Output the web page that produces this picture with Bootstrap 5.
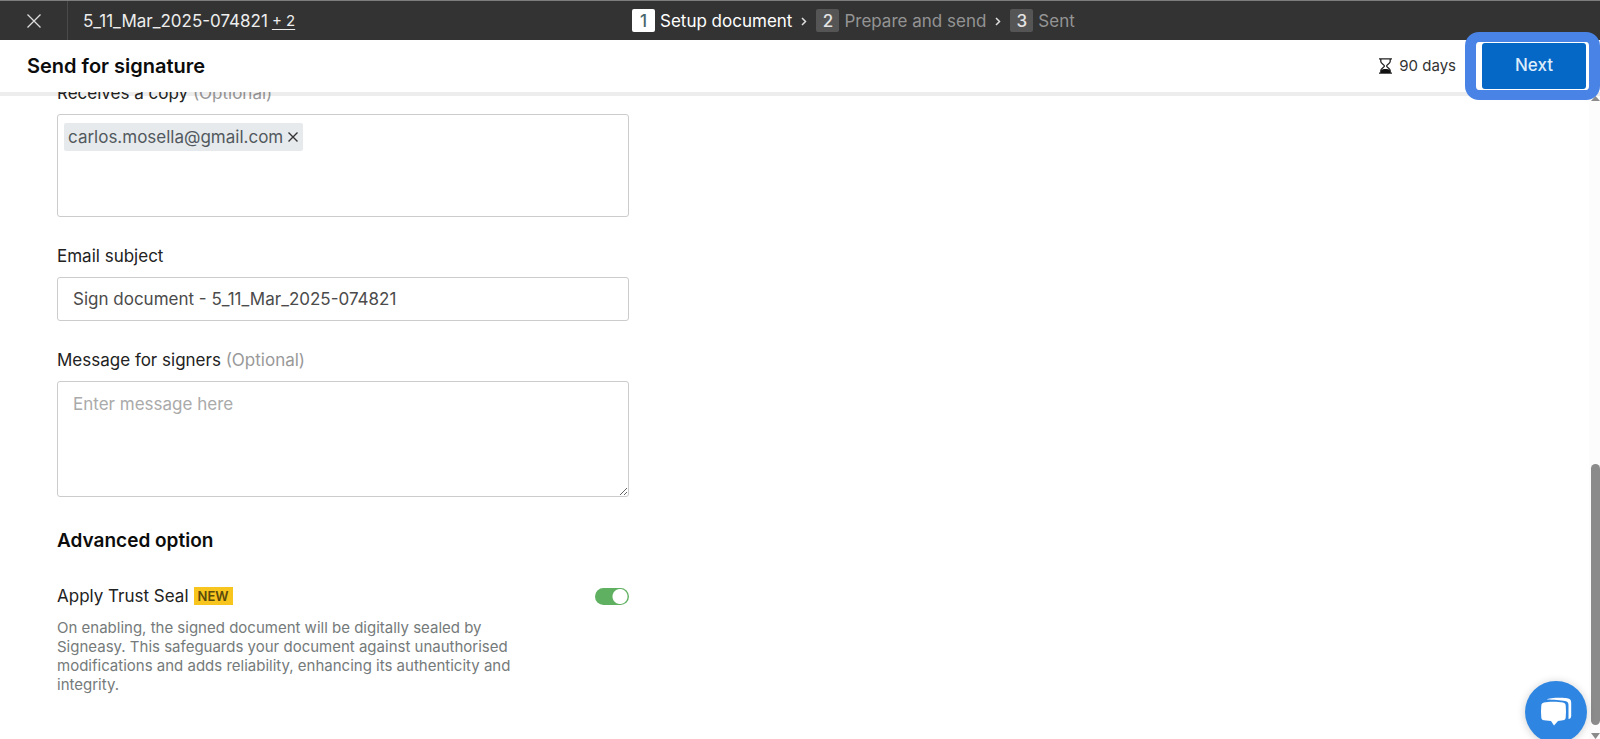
<!DOCTYPE html>
<html lang="en">
<head>
<meta charset="utf-8">
<meta name="viewport" content="width=device-width, initial-scale=1">
<title>Send for signature</title>
<link href="https://cdn.jsdelivr.net/npm/bootstrap@5.3.0/dist/css/bootstrap.min.css" rel="stylesheet">
<style>
  body { font-family: Inter, "Liberation Sans", sans-serif; font-size: 17px; line-height: 24px; color: #222; background: #fff; }
  .topbar { height: 40px; background: #333; border-top: 1px solid #7d7d7d; color: #ededed; }
  .topbar-file { width: 39.5%; }
  .close-cell { width: 68px; border-right: 1px solid #4a4a4a; color: #ddd; }
  .file-name { margin-left: 15px; }
  .more-link { font-size: 15px; color: #ededed; text-underline-offset: 3px; }
  .step-num { width: 23px; height: 23px; border-radius: 2px; background: #555; color: #e4e4e4; font-weight: 500; margin-right: 5px; }
  .step { color: #949494; }
  .step.active { color: #fff; }
  .step.active .step-num { background: #fff; color: #47666b; }
  .step-arrow { padding: 0 7px; }
  .subbar { height: 52px; z-index: 2; background: #fff; box-shadow: 0 4px 0 rgba(0,0,0,.07); }
  .page-title { font-size: 20px; line-height: 28px; font-weight: 600; color: #0c0c0c; margin-left: 27px; }
  .expiry { font-size: 15px; color: #333; gap: 7px; }
  .next-wrap { margin: 0 14px 0 26px; }
  .btn-next { width: 104px; height: 46px; border-radius: 3px; background: #0567c6; color: #dcecfa; font-size: 17px; font-weight: 500; }
  .btn-next:hover { background: #0459ad; color: #fff; }
  .highlight-ring { inset: -11px -14px -11px -17px; border: solid #4a83e6; border-width: 10px 11px; border-radius: 14px; pointer-events: none; }
  .content { min-height: 0; overflow: hidden; }
  .form-area { width: 629px; padding-left: 57px; margin-top: -11px; }
  .field-label { line-height: 24px; margin-bottom: 9px; }
  .field + .field-label { margin-top: 27px; }
  .hint { color: #999; }
  .field { border: 1px solid #ccc; border-radius: 3px; font-size: 17px; line-height: 24px; color: #4b4b4b; padding: 9px 15px; }
  .field::placeholder { color: #aaa; }
  .copy-box { min-height: 103px; padding: 8px 6px; }
  .copy-input { outline: 0; }
  .mail-chip { height: 28px; padding: 0 4px; background: #e6eaed; border-radius: 2px; color: #52595e; }
  .message-box { height: 116px; padding-top: 10px; }
  .section-title { font-size: 19px; line-height: 28px; font-weight: 600; color: #0c0c0c; margin: 30px 0 29px; }
  .tag-new { background: #f7c51e; color: #5c4a0c; font-size: 13px; line-height: 18px; font-weight: 600; padding: 0 4px; margin-left: 5px; }
  .note { width: 460px; font-size: 15px; line-height: 19px; color: #757a7a; margin-top: 10px; }
  .seal-switch .form-check-input { width: 34px; height: 17px; margin: 0; border: 0; background-color: #bbb;
    background-image: radial-gradient(circle at 9px 50%, #fff 7px, transparent 8px); background-size: 100% 100%; background-position: 0 0; }
  .seal-switch .form-check-input:checked { background-color: #5fb060;
    background-image: radial-gradient(circle at 25px 50%, #fff 7px, transparent 8px); background-position: 0 0; }
  .rail { width: 11px; padding: 4px 0 0 2px; background: #fcfcfc; }
  .rail-space { flex: 363 0 0; }
  .rail-thumb { flex: 261 0 0; width: 9px; border-radius: 5px; background: #8b8b8b; }
  .chat-btn { right: 13px; bottom: -4px; width: 62px; height: 62px; background: #2f86e2; box-shadow: 0 1px 8px rgba(0,0,0,.2); z-index: 3; }
</style>
</head>
<body>
<div class="d-flex flex-column vh-100 overflow-hidden position-relative">
  <header class="topbar d-flex align-items-stretch flex-shrink-0">
    <div class="topbar-file d-flex align-items-center">
      <button type="button" class="close-cell btn rounded-0 border-top-0 border-bottom-0 border-start-0 p-0 h-100 d-flex align-items-center justify-content-center" aria-label="Close">
        <svg width="16" height="16" viewBox="0 0 16 16" fill="none" stroke="currentColor" stroke-width="1.3"><path d="M1.5 1.5l13 13M14.5 1.5l-13 13"/></svg>
      </button>
      <span class="file-name">5_11_Mar_2025-074821</span>
      <a href="#" class="more-link ms-1">+ 2</a>
    </div>
    <ol class="list-unstyled d-flex align-items-center mb-0">
      <li class="step active d-flex align-items-center"><span class="step-num d-flex align-items-center justify-content-center">1</span>Setup document</li>
      <li class="step-arrow d-flex" aria-hidden="true"><svg width="10" height="12" viewBox="0 0 10 12" fill="none" stroke="#ddd" stroke-width="1.5"><path d="M3 3l3.5 3.5L3 10"/></svg></li>
      <li class="step d-flex align-items-center"><span class="step-num d-flex align-items-center justify-content-center">2</span>Prepare and send</li>
      <li class="step-arrow d-flex" aria-hidden="true"><svg width="10" height="12" viewBox="0 0 10 12" fill="none" stroke="#ddd" stroke-width="1.5"><path d="M3 3l3.5 3.5L3 10"/></svg></li>
      <li class="step d-flex align-items-center"><span class="step-num d-flex align-items-center justify-content-center">3</span>Sent</li>
    </ol>
  </header>

  <div class="subbar d-flex align-items-center flex-shrink-0 position-relative">
    <h1 class="page-title mb-0">Send for signature</h1>
    <div class="expiry ms-auto d-flex align-items-center">
      <svg width="13" height="16" viewBox="0 0 13 16" fill="none" stroke="#222" stroke-width="1.3"><path d="M0 .8h13M0 15.2h13M1.8 1v2.500c0 2 3.600 3.200 3.600 4.500S1.800 10.500 1.800 12.500V15M11.200 1v2.500c0 2-3.600 3.200-3.600 4.500s3.600 2.500 3.600 4.500V15"/><path d="M2 15v-2.500c1.500-1.900 7.500-1.900 9 0V15z" fill="#111" stroke="none"/></svg>
      90 days
    </div>
    <div class="next-wrap d-flex position-relative">
      <button type="button" class="btn btn-next border-0 p-0">Next</button>
      <div class="highlight-ring position-absolute"></div>
    </div>
  </div>

  <div class="content d-flex flex-grow-1">
    <main class="flex-grow-1">
      <form class="form-area">
        <label class="field-label d-block" for="copy">Receives a copy <span class="hint">(Optional)</span></label>
        <div class="field copy-box d-flex align-items-start">
          <span class="mail-chip d-flex align-items-center">carlos.mosella@gmail.com
            <button type="button" class="btn p-0 border-0 d-flex ms-1" aria-label="Remove carlos.mosella@gmail.com"><svg width="12" height="12" viewBox="0 0 12 12" fill="none" stroke="#333" stroke-width="1.4"><path d="M1.5 1.5l9 9M10.5 1.5l-9 9"/></svg></button>
          </span>
          <input id="copy" type="email" class="copy-input border-0 p-0 flex-grow-1 bg-transparent">
        </div>

        <label class="field-label d-block" for="subject">Email subject</label>
        <input id="subject" type="text" class="field d-block w-100" value="Sign document - 5_11_Mar_2025-074821">

        <label class="field-label d-block" for="message">Message for signers <span class="hint">(Optional)</span></label>
        <textarea id="message" class="field message-box d-block w-100" placeholder="Enter message here"></textarea>

        <h2 class="section-title">Advanced option</h2>
        <div class="d-flex align-items-center">
          <label for="seal">Apply Trust Seal</label>
          <span class="tag-new">NEW</span>
          <div class="seal-switch form-check form-switch ms-auto p-0 m-0 min-vh-0 d-flex align-items-center"><input id="seal" class="form-check-input" type="checkbox" role="switch" checked></div>
        </div>
        <p class="note mb-0">On enabling, the signed document will be digitally sealed by Signeasy. This safeguards your document against unauthorised modifications and adds reliability, enhancing its authenticity and integrity.</p>
      </form>
    </main>
    <div class="rail d-flex flex-column" aria-hidden="true">
      <svg width="9" height="5" viewBox="0 0 9 5"><path d="M0 5L4.5 0 9 5z" fill="#8b8b8b"/></svg>
      <div class="rail-space"></div>
      <div class="rail-thumb"></div>
      <svg class="mt-2" width="9" height="6" viewBox="0 0 9 6"><path d="M0 0h9L4.5 6z" fill="#8b8b8b"/></svg>
    </div>
  </div>

  <button type="button" class="chat-btn btn rounded-circle border-0 p-0 position-absolute d-flex align-items-center justify-content-center" aria-label="Open chat">
    <svg width="34" height="34" viewBox="0 0 34 34" fill="#fff"><path d="M5 7.500C9 6.500 19 6.500 24 7.500c1.800.4 2.500 1.200 2.700 3 .4 4 .4 8 0 12-.2 1.800-1 2.500-2.700 2.800l-5 .7-4 4.500-3-4.500-7-.7c-1.700-.3-2.500-1-2.700-2.800-.4-4-.4-8 0-12 .2-1.800 1-2.600 2.700-3z"/><path d="M8 4.500C10 2.500 28 2.300 30.500 4c1.500 1 1.700 2 1.700 4v13c-.2 2-1 2.800-2.700 3V10c0-2.500-1-3.500-3.500-4C22 5 14 5 8 4.500z"/></svg>
  </button>
</div>
<script src="https://cdn.jsdelivr.net/npm/bootstrap@5.3.0/dist/js/bootstrap.bundle.min.js"></script>
</body>
</html>
